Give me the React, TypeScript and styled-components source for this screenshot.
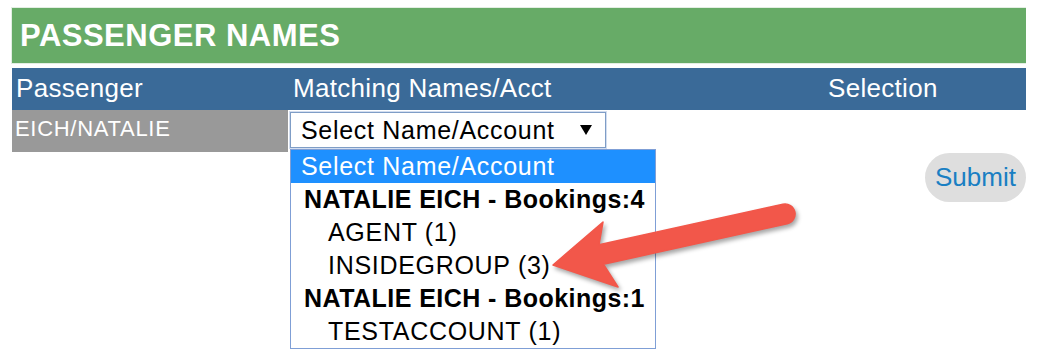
import styled, { createGlobalStyle } from 'styled-components'


const GlobalStyle = createGlobalStyle`
    html, body {
        margin: 0;
        padding: 0;
        background: #fff;
    }
    body {
        font-family: "Liberation Sans", Arial, sans-serif;
    }
`

const StyledPage = styled.div`
    position: relative;
    width: 1014px;
    height: 344px;
    padding: 8px 0 0 12px;
    overflow: hidden;
`
const StyledTitleBar = styled.div`
    display: flex;
    align-items: center;
    height: 55px;
    padding-left: 8px;
    background: #67ab67;
    box-shadow: 0 0 0 1px #e3eee3;
    color: #fff;
    font-size: 31px;
    font-weight: 700;
    letter-spacing: 0.5px;
`
const StyledGridRow = styled.div<{ $bg?: string }>`
    display: grid;
    grid-template-columns: 278px 535px 1fr;
    height: 42px;
    background: ${props => props.$bg || 'transparent'};
`
const StyledHeaderRow = styled(StyledGridRow)`
    margin-top: 5px;
    color: #fff;
    font-size: 26px;
    letter-spacing: 0.3px;
`
const StyledHeaderCell = styled.div<{ $pad?: string }>`
    display: flex;
    align-items: center;
    padding-left: ${props => props.$pad || '4px'};
    padding-bottom: 2px;
`
const StyledPassengerCell = styled.div`
    display: flex;
    align-items: center;
    width: 276px;
    box-sizing: border-box;
    padding: 0 0 4px 3px;
    background: #999;
    color: #fff;
    font-size: 22px;
    letter-spacing: 0.7px;
`
const StyledSelectCell = styled.div`
    position: relative;
    z-index: 1;
    padding-top: 2px;
`
const StyledSelect = styled.div`
    display: flex;
    align-items: center;
    width: 316px;
    height: 36px;
    box-sizing: border-box;
    padding-left: 10px;
    border: 1px solid #7f9dc6;
    box-shadow: 0 0 0 1px #d3def0;
    background: #fff;
    color: #000;
    font-size: 25px;
    letter-spacing: 0.7px;
`
const StyledSelectArrow = styled.span`
    width: 0;
    height: 0;
    margin: 0 13px 0 auto;
    border-left: 6px solid transparent;
    border-right: 6px solid transparent;
    border-top: 10px solid #000;
`
const StyledOptionList = styled.div`
    position: absolute;
    top: 39px;
    left: 0;
    width: 366px;
    box-sizing: border-box;
    border: 1px solid #7f9fd6;
    background: #fff;
`
const StyledOption = styled.div<{ $active?: boolean, $group?: boolean, $indent?: boolean }>`
    display: flex;
    align-items: center;
    height: 33px;
    padding-left: ${props => props.$indent ? '37px' : props.$group ? '13px' : '10px'};
    background: ${props => props.$active ? '#1e90ff' : 'transparent'};
    color: ${props => props.$active ? '#fff' : '#000'};
    font-size: 25px;
    font-weight: ${props => props.$group ? 700 : 400};
    letter-spacing: ${props => props.$group ? '0.45px' : '0.7px'};
    white-space: nowrap;
`
const StyledActions = styled.div`
    display: flex;
    justify-content: flex-end;
    margin-top: 1px;
`
const StyledSubmit = styled.button`
    width: 101px;
    height: 49px;
    padding: 0;
    border: none;
    border-radius: 25px;
    background: #dedede;
    color: #1a7fc3;
    font-family: "Liberation Sans", Arial, sans-serif;
    font-size: 26px;
`
const StyledCallout = styled.svg`
    position: absolute;
    z-index: 2;
    left: 540px;
    top: 190px;
    overflow: visible;
    filter: drop-shadow(2px 3px 2px rgba(0, 0, 0, 0.35));
`


const options = [
    { label: 'Select Name/Account', active: true },
    { label: 'NATALIE EICH - Bookings:4', group: true },
    { label: 'AGENT (1)', indent: true },
    { label: 'INSIDEGROUP (3)', indent: true },
    { label: 'NATALIE EICH - Bookings:1', group: true },
    { label: 'TESTACCOUNT (1)', indent: true }
]

export default function App() {
    return (
        <>
            <GlobalStyle />
            <StyledPage>
                <StyledTitleBar>PASSENGER NAMES</StyledTitleBar>
                <StyledHeaderRow $bg="#3a6a98">
                    <StyledHeaderCell $pad="4px">Passenger</StyledHeaderCell>
                    <StyledHeaderCell $pad="3px">Matching Names/Acct</StyledHeaderCell>
                    <StyledHeaderCell $pad="3px">Selection</StyledHeaderCell>
                </StyledHeaderRow>
                <StyledGridRow>
                    <StyledPassengerCell>EICH/NATALIE</StyledPassengerCell>
                    <StyledSelectCell>
                        <StyledSelect>
                            Select Name/Account
                            <StyledSelectArrow />
                        </StyledSelect>
                        <StyledOptionList>
                            {options.map((o, i) => (
                                <StyledOption key={i} $active={o.active} $group={o.group} $indent={o.indent}>
                                    {o.label}
                                </StyledOption>
                            ))}
                        </StyledOptionList>
                    </StyledSelectCell>
                    <div />
                </StyledGridRow>
                <StyledActions>
                    <StyledSubmit>Submit</StyledSubmit>
                </StyledActions>
                {/* red annotation arrow pointing at INSIDEGROUP */}
                <StyledCallout width="270" height="110" viewBox="540 190 270 110">
                    <path
                        d="M553 265 L603 222 L599 244.7 L782.9 204.2 A10 10 0 0 1 787.2 223.8 L603.4 264.2 L618 287 Z"
                        fill="#f2574a"
                        strokeLinejoin="round"
                        stroke="#f2574a"
                        strokeWidth="1.5"
                    />
                </StyledCallout>
            </StyledPage>
        </>
    )
}
